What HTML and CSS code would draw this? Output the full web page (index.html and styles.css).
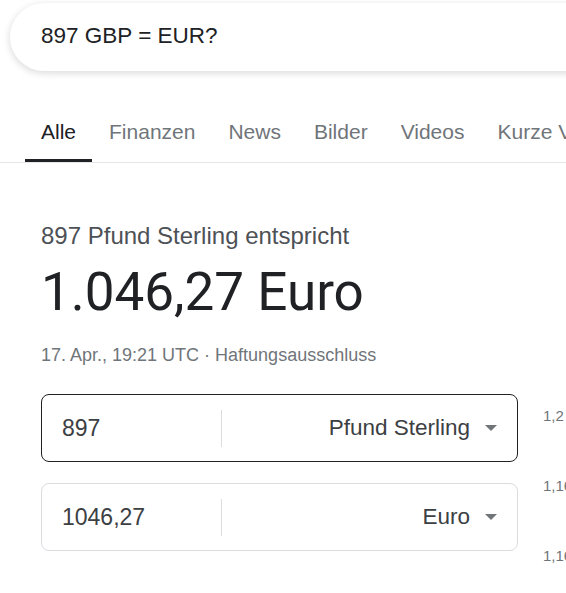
FILE: index.html
```html
<!DOCTYPE html>
<html lang="de">
<head>
<meta charset="utf-8">
<link rel="stylesheet" href="styles.css">
</head>
<body>
<div class="page">
  <div class="search">
    <span class="query">897 GBP = EUR?</span>
  </div>
  <nav class="tabs">
    <span class="tab active">Alle</span>
    <span class="tab">Finanzen</span>
    <span class="tab">News</span>
    <span class="tab">Bilder</span>
    <span class="tab">Videos</span>
    <span class="tab">Kurze Videos</span>
  </nav>
  <main class="result">
    <div class="sub">897 Pfund Sterling entspricht</div>
    <div class="big">1.046,27 Euro</div>
    <div class="meta">17. Apr., 19:21 UTC · Haftungsausschluss</div>
    <div class="conv-row">
      <div class="conv">
        <div class="box focused">
          <span class="amount">897</span>
          <span class="sep"></span>
          <span class="cur">Pfund Sterling</span>
          <span class="caret"></span>
        </div>
        <div class="box">
          <span class="amount">1046,27</span>
          <span class="sep"></span>
          <span class="cur">Euro</span>
          <span class="caret"></span>
        </div>
      </div>
      <div class="axis">
        <span>1,2</span>
        <span>1,16</span>
        <span>1,16</span>
      </div>
    </div>
  </main>
</div>
</body>
</html>
```

FILE: styles.css
```css
html, body {
  margin: 0;
  padding: 0;
  background: #fff;
}
body {
  font-family: "Liberation Sans", Arial, sans-serif;
  color: #202124;
  overflow: hidden;
  width: 566px;
  height: 593px;
}
.page {
  padding-top: 3px;
  width: 566px;
  overflow: hidden;
}
.search {
  margin-left: 10px;
  width: 640px;
  height: 68px;
  border-radius: 34px;
  background: #fff;
  box-shadow: 0 2px 6px 1px rgba(64, 60, 67, 0.16);
  display: flex;
  align-items: center;
  padding-left: 31px;
  box-sizing: border-box;
}
.query {
  font-size: 22.5px;
  color: #202124;
  position: relative;
  top: -1px;
}
.tabs {
  display: flex;
  margin-top: 32px;
  padding-left: 25px;
  border-bottom: 1px solid #e6e6e6;
  white-space: nowrap;
  width: 700px;
}
.tab {
  padding: 16px 16px 14px;
  margin-right: 1px;
  font-size: 21px;
  line-height: 26px;
  color: #70757a;
  border-bottom: 3px solid transparent;
}
.tab.active {
  color: #202124;
  border-bottom-color: #202124;
}
.result {
  padding-left: 41px;
  padding-top: 59px;
}
.sub {
  font-size: 24px;
  line-height: 28px;
  color: #4d5156;
}
.big {
  margin-top: 14px;
  font-family: Roboto, "Liberation Sans", sans-serif;
  font-size: 53px;
  line-height: 56px;
  color: #202124;
}
.meta {
  margin-top: 25px;
  font-size: 18px;
  line-height: 20px;
  color: #70757a;
}
.conv-row {
  display: flex;
  margin-top: 29px;
  gap: 25px;
}
.conv {
  width: 477px;
  display: flex;
  flex-direction: column;
  gap: 21px;
  flex-shrink: 0;
}
.box {
  height: 68px;
  box-sizing: border-box;
  border: 1px solid #dadce0;
  border-radius: 8px;
  display: flex;
  align-items: center;
  padding-left: 20px;
  padding-right: 20px;
}
.box.focused {
  border-color: #202124;
}
.amount {
  width: 159px;
  font-size: 23px;
  color: #3c4043;
}
.sep {
  width: 1px;
  height: 37px;
  background: #dadce0;
}
.cur {
  flex: 1;
  text-align: right;
  font-size: 22.5px;
  color: #3c4043;
}
.caret {
  margin-left: 15px;
  width: 0;
  height: 0;
  border-left: 6px solid transparent;
  border-right: 6px solid transparent;
  border-top: 6px solid #70757a;
}
.axis {
  display: flex;
  flex-direction: column;
  font-size: 15px;
  color: #70757a;
  white-space: nowrap;
  padding-top: 13px;
  gap: 52px;
  line-height: 18px;
}
```
